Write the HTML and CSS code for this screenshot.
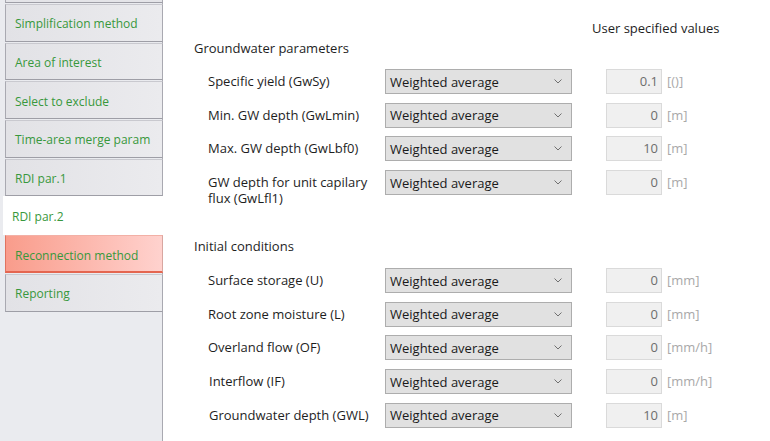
FILE: index.html
```html
<!DOCTYPE html>
<html>
<head>
<meta charset="utf-8">
<link rel="stylesheet" href="styles.css">
</head>
<body>
<div class="app">
  <aside class="sidebar">
    <div class="tab-cut"></div>
    <div class="tab">Simplification method</div>
    <div class="tab">Area of interest</div>
    <div class="tab">Select to exclude</div>
    <div class="tab">Time-area merge param</div>
    <div class="tab">RDI par.1</div>
    <div class="tab tab-active">RDI par.2</div>
    <div class="tab tab-warn">Reconnection method</div>
    <div class="tab">Reporting</div>
  </aside>
  <main class="content">
    <div class="user-head">User specified values</div>

    <div class="group-title">Groundwater parameters</div>
    <div class="rows">
      <div class="row">
        <div class="label">Specific yield (GwSy)</div>
        <div class="select"><span>Weighted average</span><svg class="chev" width="8" height="5" viewBox="0 0 8 5"><polyline points="0.5,0.5 4,4 7.5,0.5" fill="none" stroke="#707070" stroke-width="1"/></svg></div>
        <div class="value">0.1</div>
        <div class="unit">[()]</div>
      </div>
      <div class="row">
        <div class="label">Min. GW depth (GwLmin)</div>
        <div class="select"><span>Weighted average</span><svg class="chev" width="8" height="5" viewBox="0 0 8 5"><polyline points="0.5,0.5 4,4 7.5,0.5" fill="none" stroke="#707070" stroke-width="1"/></svg></div>
        <div class="value">0</div>
        <div class="unit">[m]</div>
      </div>
      <div class="row">
        <div class="label">Max. GW depth (GwLbf0)</div>
        <div class="select"><span>Weighted average</span><svg class="chev" width="8" height="5" viewBox="0 0 8 5"><polyline points="0.5,0.5 4,4 7.5,0.5" fill="none" stroke="#707070" stroke-width="1"/></svg></div>
        <div class="value">10</div>
        <div class="unit">[m]</div>
      </div>
      <div class="row">
        <div class="label">GW depth for unit capilary flux (GwLfl1)</div>
        <div class="select"><span>Weighted average</span><svg class="chev" width="8" height="5" viewBox="0 0 8 5"><polyline points="0.5,0.5 4,4 7.5,0.5" fill="none" stroke="#707070" stroke-width="1"/></svg></div>
        <div class="value">0</div>
        <div class="unit">[m]</div>
      </div>
    </div>

    <div class="group-title group-second">Initial conditions</div>
    <div class="rows rows-second">
      <div class="row">
        <div class="label">Surface storage (U)</div>
        <div class="select"><span>Weighted average</span><svg class="chev" width="8" height="5" viewBox="0 0 8 5"><polyline points="0.5,0.5 4,4 7.5,0.5" fill="none" stroke="#707070" stroke-width="1"/></svg></div>
        <div class="value">0</div>
        <div class="unit">[mm]</div>
      </div>
      <div class="row">
        <div class="label">Root zone moisture (L)</div>
        <div class="select"><span>Weighted average</span><svg class="chev" width="8" height="5" viewBox="0 0 8 5"><polyline points="0.5,0.5 4,4 7.5,0.5" fill="none" stroke="#707070" stroke-width="1"/></svg></div>
        <div class="value">0</div>
        <div class="unit">[mm]</div>
      </div>
      <div class="row">
        <div class="label">Overland flow (OF)</div>
        <div class="select"><span>Weighted average</span><svg class="chev" width="8" height="5" viewBox="0 0 8 5"><polyline points="0.5,0.5 4,4 7.5,0.5" fill="none" stroke="#707070" stroke-width="1"/></svg></div>
        <div class="value">0</div>
        <div class="unit">[mm/h]</div>
      </div>
      <div class="row">
        <div class="label label-shift">Interflow (IF)</div>
        <div class="select"><span>Weighted average</span><svg class="chev" width="8" height="5" viewBox="0 0 8 5"><polyline points="0.5,0.5 4,4 7.5,0.5" fill="none" stroke="#707070" stroke-width="1"/></svg></div>
        <div class="value">0</div>
        <div class="unit">[mm/h]</div>
      </div>
      <div class="row">
        <div class="label label-shift">Groundwater depth (GWL)</div>
        <div class="select"><span>Weighted average</span><svg class="chev" width="8" height="5" viewBox="0 0 8 5"><polyline points="0.5,0.5 4,4 7.5,0.5" fill="none" stroke="#707070" stroke-width="1"/></svg></div>
        <div class="value">10</div>
        <div class="unit">[m]</div>
      </div>
    </div>
  </main>
</div>
</body>
</html>
```
FILE: styles.css
```css
html, body {
  margin: 0;
  padding: 0;
  background: #ffffff;
}
body {
  font-family: "Open Sans", "Noto Sans", sans-serif;
  font-size: 12px;
  color: #1e1e1e;
  width: 770px;
  height: 441px;
  overflow: hidden;
}
.app {
  display: flex;
  height: 441px;
}
.sidebar {
  width: 162px;
  flex: none;
  background: #eaebef;
  border-right: 1px solid #a9a9b1;
  display: flex;
  flex-direction: column;
  gap: 1px;
}
.tab-cut {
  height: 2px;
  margin-left: 5px;
  margin-right: -1px;
  background: #e4e4e8;
  border-left: 1px solid #a9a9b1;
  border-right: 1px solid #a9a9b1;
  border-bottom: 1px solid #9e9ea6;
}
.tab {
  height: 37.7px;
  box-sizing: border-box;
  margin-left: 5px;
  margin-right: -1px;
  padding-left: 9px;
  padding-top: 2px;
  display: flex;
  align-items: center;
  color: #38983c;
  background: linear-gradient(to right, #e2e2e6, #ebebee);
  border: 1px solid #a9a9b1;
  border-top-color: #c9c9cf;
  border-bottom-color: #9e9ea6;
}
.tab-active {
  margin-left: 3px;
  margin-right: -2px;
  padding-left: 9px;
  height: 39px;
  background: #ffffff;
  border: none;
  margin-top: -1px;
  margin-bottom: -1px;
}
.tab-warn {
  background: linear-gradient(to right, #f99c8b, #ffd2ce);
  border-left-color: #e0735f;
  border-top-color: #f2b0a6;
  border-right-color: #d8a6a0;
  border-bottom: 2px solid #e46650;
  padding-top: 3px;
}
.content {
  flex: 1;
  padding-left: 31px;
  padding-top: 20px;
  font-size: 13px;
}
.user-head {
  margin-left: 398px;
  line-height: 16px;
}
.group-title {
  margin-top: 4px;
  line-height: 16px;
}
.group-second {
  margin-top: 32px;
}
.rows {
  margin-top: 13px;
  display: flex;
  flex-direction: column;
  gap: 8.7px;
}
.rows-second {
  margin-top: 14px;
}
.row {
  display: flex;
  align-items: flex-start;
}
.label {
  width: 177px;
  margin-left: 14px;
  padding-top: 4px;
  line-height: 16px;
}
.label-shift {
  margin-left: 15px;
  width: 176px;
}
.select {
  width: 187px;
  height: 25px;
  box-sizing: border-box;
  background: #e1e1e1;
  border: 1px solid #adadad;
  display: flex;
  align-items: center;
  justify-content: space-between;
  padding-left: 4px;
  padding-right: 9px;
  color: #1a1a1a;
}
.chev {
  display: block;
}
.value {
  margin-left: 34px;
  width: 56px;
  height: 25px;
  box-sizing: border-box;
  background: #f0f0f0;
  border: 1px solid #dadada;
  text-align: right;
  padding-right: 3px;
  line-height: 23px;
  color: #6d6d6d;
}
.unit {
  margin-left: 5px;
  line-height: 25px;
  color: #a9a9a9;
}
```
